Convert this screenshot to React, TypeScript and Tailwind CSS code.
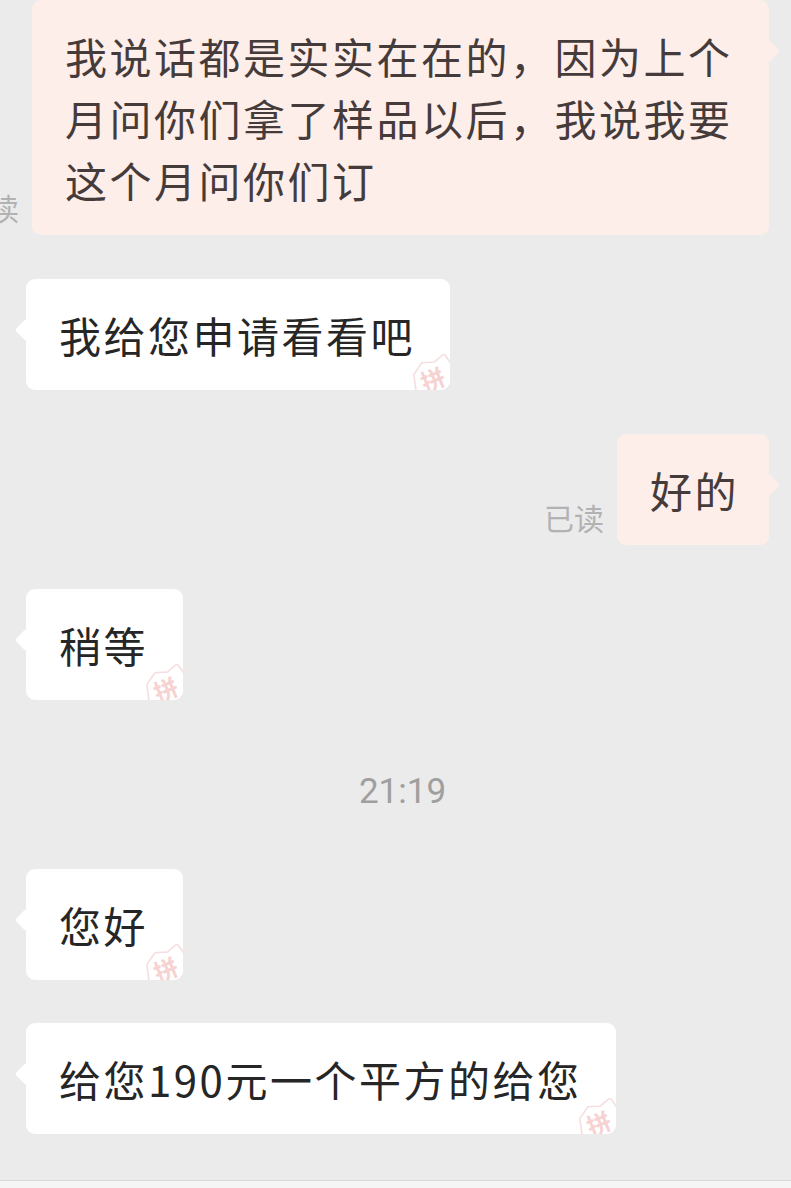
const FONT = { fontFamily: '"Noto Sans CJK SC", "Noto Sans", sans-serif' };

const Watermark = () => (
  <svg
    className="absolute right-[-8px] bottom-[-10px] opacity-60"
    width="52"
    height="46"
    viewBox="0 0 52 46"
  >
    <g transform="rotate(-22 26 23)">
      <path
        d="M10 14 L22 6 L34 10 L46 6 L50 24 L40 42 L16 44 L6 30 Z"
        fill="none"
        stroke="#f1c9c9"
        strokeWidth="1.6"
        strokeLinejoin="round"
      />
      <text
        x="27"
        y="35"
        textAnchor="middle"
        fontSize="24"
        fontWeight="700"
        fill="#f0b4b4"
        style={{ fontFamily: '"Noto Sans CJK SC", sans-serif' }}
      >
        拼
      </text>
    </g>
  </svg>
);

const LeftBubble = ({ text }: { text: string }) => (
  <div className="flex pl-[26px]">
    <div className="relative">
      <div className="absolute left-[-8px] top-[43px] w-4 h-4 rotate-45 rounded-[3px] bg-white" />
      <div className="relative overflow-hidden rounded-[9px] bg-white pl-[33px] pr-[35px] py-[24.5px] text-[42px] leading-[62px] tracking-[2.5px] text-[#262626]">
        {text}
        <Watermark />
      </div>
    </div>
  </div>
);

const RightBubble = ({ lines, width }: { lines: string[]; width?: string }) => (
  <div className="flex justify-end items-end pr-[22px]">
    <span className="mr-[13px] mb-[8px] shrink-0 text-[30px] leading-[40px] text-[#b2b2b2]">已读</span>
    <div className={`relative shrink-0 ${width ?? ""}`}>
      <div className="absolute right-[-8px] top-[43px] w-4 h-4 rotate-45 rounded-[3px] bg-[#fdeeea]" />
      <div className="relative rounded-[9px] bg-[#fdeeea] pl-[33px] pr-[30px] py-[24.5px] text-[42px] leading-[62px] tracking-[2.5px] text-[#463b3b]">
        {lines.map((l) => (
          <div key={l} className="whitespace-nowrap">
            {l}
          </div>
        ))}
      </div>
    </div>
  </div>
);

export default function App() {
  return (
    <div className="w-[791px] h-[1188px] overflow-hidden bg-[#ebebeb] flex flex-col" style={FONT}>
      <div className="flex flex-col gap-[44px]">
        <RightBubble
          width="w-[737px]"
          lines={[
            "我说话都是实实在在的，因为上个",
            "月问你们拿了样品以后，我说我要",
            "这个月问你们订",
          ]}
        />
        <LeftBubble text="我给您申请看看吧" />
        <RightBubble lines={["好的"]} />
        <LeftBubble text="稍等" />
      </div>

      <div
        className="mt-[72px] mb-[57px] pl-[14px] text-center text-[35px] leading-[40px] text-[#9f9f9f]"
        style={{ fontFamily: 'Roboto, "Noto Sans", sans-serif' }}
      >
        21:19
      </div>

      <div className="flex flex-col gap-[43px]">
        <LeftBubble text="您好" />
        <LeftBubble text="给您190元一个平方的给您" />
      </div>

      <div className="mt-auto h-[8px] border-t border-[#d9d9d9] bg-[#f5f5f5]" />
    </div>
  );
}
